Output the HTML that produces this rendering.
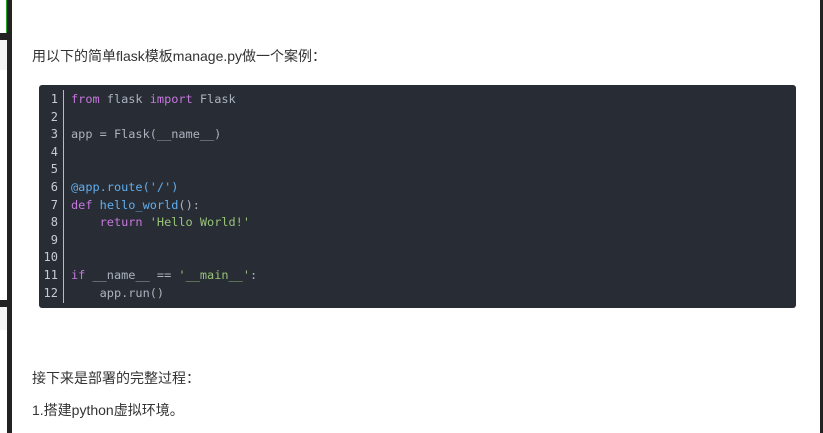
<!DOCTYPE html>
<html><head><meta charset="utf-8"><style>
body{margin:0;width:823px;height:433px;background:#fff;position:relative;overflow:hidden;font-family:"Liberation Sans","Noto Sans CJK SC",sans-serif;}
.abs{position:absolute}
p{position:absolute;left:32px;margin:0;font-size:14px;color:#333;line-height:20px;white-space:nowrap}
.code{position:absolute;left:39px;top:85px;width:757px;height:223px;background:#282c34;border-radius:3px}
.ln{position:absolute;left:0;top:6px;width:19px;text-align:right;font-family:"DejaVu Sans Mono",monospace;font-size:12px;line-height:17.6px;color:#c8cbd0}
.sep{position:absolute;left:24px;top:5px;width:1px;height:213px;background:#bbb}
.src{position:absolute;left:32px;top:6px;font-family:"DejaVu Sans Mono",monospace;font-size:11.9px;line-height:17.6px;color:#abb2bf;white-space:pre}
.k{color:#c678dd}.f{color:#61aeee}.s{color:#98c379}
</style></head><body>
<div class="abs" style="left:0;top:0;width:12px;height:433px;background:#222"></div>
<div class="abs" style="left:0;top:0;width:6px;height:33px;background:#fff;border-right:1px solid #2a2"></div>
<div class="abs" style="left:0;top:40px;width:7px;height:30px;background:#f3f3f3"></div>
<div class="abs" style="left:0;top:70px;width:7px;height:230px;background:#fff"></div>
<div class="abs" style="left:0;top:307px;width:7px;height:23px;background:#f3f3f3"></div>
<div class="abs" style="left:0;top:330px;width:7px;height:103px;background:#fff"></div>
<div class="abs" style="left:820px;top:0;width:3px;height:433px;background:#222"></div>
<p style="top:46px">用以下的简单flask模板manage.py做一个案例：</p>
<div class="code">
<div class="ln">1<br>2<br>3<br>4<br>5<br>6<br>7<br>8<br>9<br>10<br>11<br>12</div>
<div class="sep"></div>
<div class="src"><span class="k">from</span> flask <span class="k">import</span> Flask

app = Flask(__name__)


<span class="f">@app.route('/')</span>
<span class="k">def</span> <span class="f">hello_world</span>():
    <span class="k">return</span> <span class="s">'Hello World!'</span>


<span class="k">if</span> __name__ == <span class="s">'__main__'</span>:
    app.run()</div>
</div>
<p style="top:368px">接下来是部署的完整过程：</p>
<p style="top:400px">1.搭建python虚拟环境。</p>
</body></html>
